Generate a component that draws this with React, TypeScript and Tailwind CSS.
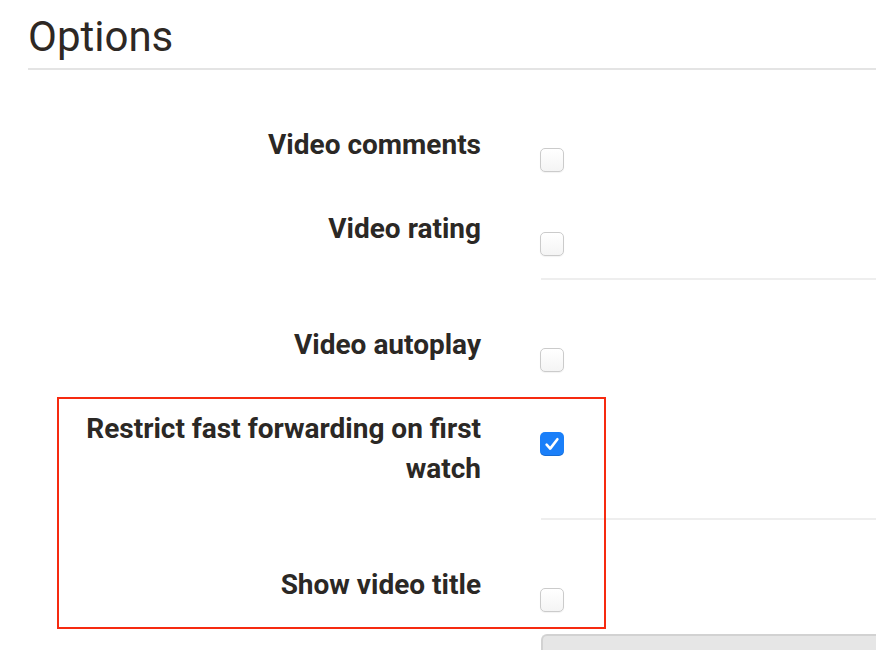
import React from 'react';

const Checkbox = ({ checked = false }: { checked?: boolean }) =>
  checked ? (
    <div className="mt-6 flex h-6 w-6 items-center justify-center rounded-[5px] bg-[#1a7ff9] shadow-[inset_0_-1px_0_rgba(0,0,0,0.15)]">
      <svg width="20" height="20" viewBox="0 0 20 20" fill="none">
        <path d="M4.6 10.6l3.6 4L15.4 5.2" stroke="white" strokeWidth="2.6" strokeLinecap="round" strokeLinejoin="round" />
      </svg>
    </div>
  ) : (
    <div className="mt-6 h-6 w-6 rounded-[5px] border border-[#cbcbcb] bg-linear-to-b from-white to-[#f4f4f4] shadow-[0_1px_1px_rgba(0,0,0,0.05)]" />
  );

const Row = ({ label, checked }: { label: string; checked?: boolean }) => (
  <div className="flex pb-[29px]">
    <div className="w-[481px] shrink-0 pl-[70px] pt-px text-right text-[28px] font-bold leading-10 text-[#2b2825]">
      {label}
    </div>
    <div className="ml-[59px] h-10">
      <Checkbox checked={checked} />
    </div>
  </div>
);

const Separator = () => (
  <div className="mb-[44px] flex">
    <div className="w-[541px] shrink-0" />
    <div className="h-[2px] flex-1 bg-[#eeeeee]" />
  </div>
);

const Spacer = () => <div className="h-[14px]" />;

export default function App() {
  return (
    <div className="relative h-[650px] overflow-hidden bg-white font-['Roboto','Liberation_Sans',sans-serif]">
      <div className="ml-7 pt-[15px]">
        <h1 className="border-b-2 border-[#e4e4e4] pb-[9px] text-[42px] font-normal leading-[44px] text-[#2e2824]">
          Options
        </h1>
      </div>

      <div className="mt-[54px]">
        <Row label="Video comments" />
        <Spacer />
        <Row label="Video rating" />
        <Separator />
        <Row label="Video autoplay" />
        <Spacer />
        <Row label="Restrict fast forwarding on first watch" checked />
        <Separator />
        <Row label="Show video title" />
        <div className="flex">
          <div className="w-[541px] shrink-0" />
          <div className="h-5 flex-1 rounded-tl-[6px] border-l-2 border-t-2 border-[#d2d2d2] bg-[#e6e6e6]" />
        </div>
      </div>

      <div className="pointer-events-none absolute left-[57px] top-[397px] h-[232px] w-[549px] border-2 border-[#f62a10]" />
    </div>
  );
}
